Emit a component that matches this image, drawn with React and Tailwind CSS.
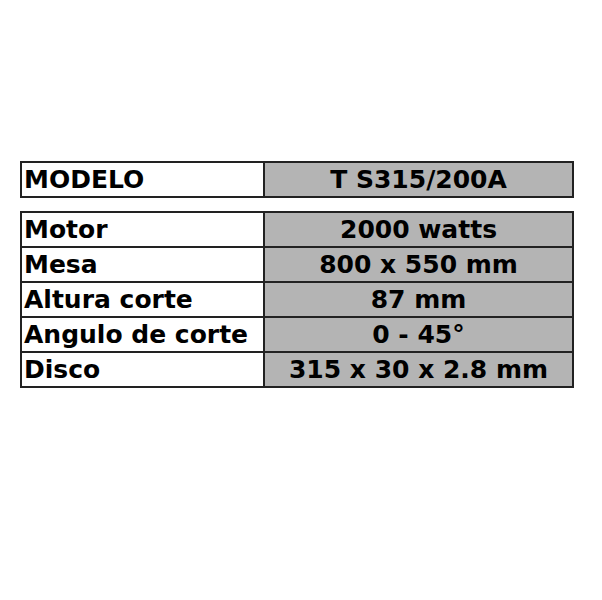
export default function App() {
  const rows = [
    ["Motor", "2000 watts"],
    ["Mesa", "800 x 550 mm"],
    ["Altura corte", "87 mm"],
    ["Angulo de corte", "0 - 45°"],
    ["Disco", "315 x 30 x 2.8 mm"],
  ];
  const font = { fontFamily: '"Comic Sans MS", "DejaVu Sans", sans-serif' };
  return (
    <div className="w-[602px] h-[600px] bg-white pt-[161px] pl-[20px]" style={font}>
      <div className="w-[554px] flex border-2 border-[#222] h-[37px] text-[25px] font-bold text-black leading-none">
        <div className="w-[243px] border-r-2 border-[#222] flex items-center pl-[2px]">MODELO</div>
        <div className="flex-1 bg-[#b4b4b4] flex items-center justify-center">T S315/200A</div>
      </div>
      <div className="mt-[13px] w-[554px] border-2 border-[#222] text-[25px] font-bold text-black leading-none">
        {rows.map(([a, b], i) => (
          <div key={a} className={`flex ${i > 0 ? "h-[35px] border-t-2 border-[#222]" : "h-[33px]"}`}>
            <div className="w-[243px] border-r-2 border-[#222] flex items-center pl-[2px]">{a}</div>
            <div className="flex-1 bg-[#b4b4b4] flex items-center justify-center">{b}</div>
          </div>
        ))}
      </div>
    </div>
  );
}
